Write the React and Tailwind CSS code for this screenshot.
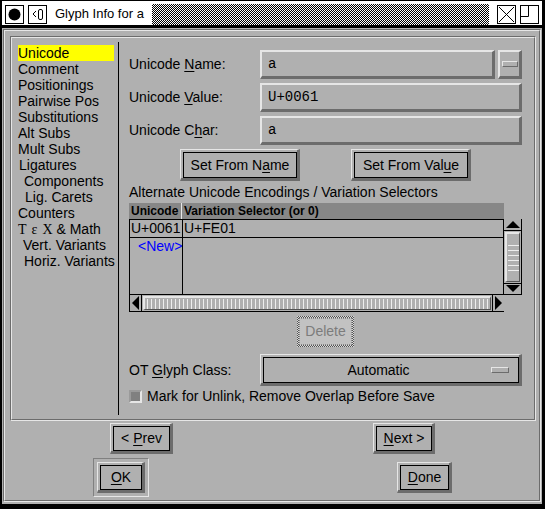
import React from "react";

function U({ children }) {
  return <span className="underline underline-offset-[2px]">{children}</span>;
}

function Box({ children }) {
  return (
    <div className="w-[19px] h-[19px] border border-black bg-white flex items-center justify-center">
      {children}
    </div>
  );
}

function TitleBar() {
  return (
    <div className="h-[24px] bg-white flex items-start shrink-0">
      <div className="ml-[3px] mt-[4px]">
        <Box>
          <svg width="17" height="17" viewBox="0 0 17 17">
            <circle cx="8.5" cy="8.5" r="6" fill="#000" />
          </svg>
        </Box>
      </div>
      <div className="ml-[4px] mt-[4px]">
        <Box>
          <svg width="17" height="17" viewBox="0 0 17 17">
            <rect x="4" y="7" width="1" height="2" fill="#000" />
            <rect x="5" y="6" width="1" height="1" fill="#000" />
            <rect x="5" y="9" width="1" height="1" fill="#000" />
            <rect x="6" y="5" width="1" height="1" fill="#000" />
            <rect x="6" y="10" width="1" height="1" fill="#000" />
            <rect x="9.5" y="3.5" width="4" height="10" rx="1.5" fill="none" stroke="#000" strokeWidth="1" />
          </svg>
        </Box>
      </div>
      <div className="ml-[8px] mt-[5px] text-[13px] leading-[16px] whitespace-nowrap">Glyph Info for a</div>
      <div className="ml-[8px] mt-[3px] h-[21px] flex-1 bg-[repeating-conic-gradient(#000_0_25%,#fff_0_50%)] bg-[length:2px_2px]" />
      <div className="ml-[8px] mt-[4px]">
        <Box>
          <svg width="17" height="17" viewBox="0 0 17 17">
            <path d="M1 1 L16 16 M16 1 L1 16" stroke="#000" strokeWidth="1" fill="none" />
          </svg>
        </Box>
      </div>
      <div className="ml-[4px] mt-[4px] mr-[3px]">
        <Box>
          <svg width="17" height="17" viewBox="0 0 17 17">
            <path d="M7.5 0 L7.5 10.5 L0 10.5" stroke="#000" strokeWidth="1" fill="none" />
          </svg>
        </Box>
      </div>
    </div>
  );
}

function Field({ children, className = "" }) {
  return (
    <div
      className={`h-[29px] border-t-2 border-l-2 border-b-[3px] border-r-[3px] border-t-[#e6e6e6] border-l-[#e6e6e6] border-b-[#6c6c6c] border-r-[#6c6c6c] flex items-center pl-[6px] font-['Liberation_Mono',monospace] text-[14px] ${className}`}
    >
      {children}
    </div>
  );
}

function Button({ children, className = "", w, h = "h-[32px]" }) {
  return (
    <div
      className={`${w} ${h} border-t border-l border-t-[#e6e6e6] border-l-[#e6e6e6] border-b-[3px] border-r-[3px] border-b-[#6c6c6c] border-r-[#6c6c6c] p-[2px] pb-0 pr-0 ${className}`}
    >
      <div className="w-full h-full border border-black flex items-center justify-center text-[14px] whitespace-nowrap">
        {children}
      </div>
    </div>
  );
}

const navItems = [
  ["Unicode", "pl-0", true],
  ["Comment", "pl-0"],
  ["Positionings", "pl-0"],
  ["Pairwise Pos", "pl-0"],
  ["Substitutions", "pl-0"],
  ["Alt Subs", "pl-0"],
  ["Mult Subs", "pl-0"],
  ["Ligatures", "pl-[1px]"],
  ["Components", "pl-[6px]"],
  ["Lig. Carets", "pl-[7px]"],
  ["Counters", "pl-0"],
  ["TEX", "pl-0"],
  ["Vert. Variants", "pl-[5px]"],
  ["Horiz. Variants", "pl-[6px]"],
];

function Nav() {
  return (
    <div className="w-[106px] pt-[7px] pl-[6px] pr-[4px] text-[14px] leading-[16px]">
      {navItems.map(([t, pl, sel]) => (
        <div key={t} className={`h-[16px] whitespace-nowrap ${pl} ${sel ? "bg-[#ffff00]" : ""}`}>
          {t === "TEX" ? (
            <span>
              <span className="font-['Liberation_Serif',serif]">Τ</span>
              <span className="ml-[5px] font-['Liberation_Serif',serif]">ε</span>
              <span className="ml-[5px] font-['Liberation_Serif',serif]">Χ</span> &amp; Math
            </span>
          ) : (
            t
          )}
        </div>
      ))}
    </div>
  );
}

function VScroll() {
  return (
    <div className="w-[18px] h-[76px] border-r border-b border-black flex flex-col">
      <div className="h-[12px] flex items-center justify-center border-b border-black">
        <svg width="14" height="8" viewBox="0 0 14 8">
          <path d="M7 0 L14 7 L0 7 Z" fill="#000" />
        </svg>
      </div>
      <div className="flex-1 mx-[1px] my-[1px] border-t-2 border-l-2 border-t-[#e6e6e6] border-l-[#e6e6e6] border-b border-r border-b-[#555] border-r-[#555] flex flex-col items-center justify-center gap-[4px]">
        {[0, 1, 2, 3, 4, 5].map((i) => (
          <div key={i} className="w-[11px] h-[1px] bg-[#eeeeee]" />
        ))}
      </div>
      <div className="h-[11px] flex items-center justify-center border-t border-black">
        <svg width="14" height="8" viewBox="0 0 14 8">
          <path d="M0 0 L14 0 L7 7 Z" fill="#000" />
        </svg>
      </div>
    </div>
  );
}

function HScroll() {
  const ticks = Array.from({ length: 86 });
  return (
    <div className="h-[17px] w-[375px] border-l border-b border-black flex items-stretch">
      <div className="w-[12px] flex items-center justify-center border-r border-black">
        <svg width="8" height="14" viewBox="0 0 8 14">
          <path d="M0 7 L7 0 L7 14 Z" fill="#000" />
        </svg>
      </div>
      <div className="flex-1 my-[1px] mx-[1px] border-t-2 border-l-2 border-t-[#e6e6e6] border-l-[#e6e6e6] border-b border-r border-b-[#555] border-r-[#555] flex items-center pl-[2px] gap-[3px] overflow-hidden">
        {ticks.map((_, i) => (
          <div key={i} className="w-[1px] h-[10px] bg-[#eeeeee] shrink-0" />
        ))}
      </div>
      <div className="w-[12px] flex items-center justify-center border-l border-black">
        <svg width="8" height="14" viewBox="0 0 8 14">
          <path d="M0 0 L7 7 L0 14 Z" fill="#000" />
        </svg>
      </div>
    </div>
  );
}

function Table() {
  return (
    <div className="flex flex-col">
      <div className="flex">
        <div className="w-[375px] h-[16px] bg-[#878787] flex text-[12px] font-bold leading-[16px]">
          <div className="w-[53px] pl-[2px] border-r border-[#e6e6e6]">Unicode</div>
          <div className="pl-[2px]">Variation Selector (or 0)</div>
        </div>
      </div>
      <div className="flex">
        <div className="w-[375px] h-[76px] border border-black flex text-[14px] leading-[17px]">
          <div className="w-[53px] border-r border-black flex flex-col">
            <div className="h-[18px] border-b border-black pl-[1px]">U+0061</div>
            <div className="pl-[8px] text-[#0000ff]">&lt;New&gt;</div>
          </div>
          <div className="flex-1 flex flex-col">
            <div className="h-[18px] border-b border-black pl-[1px]">U+FE01</div>
          </div>
        </div>
        <VScroll />
      </div>
      <HScroll />
    </div>
  );
}

function RightPanel() {
  return (
    <div className="flex-1 pl-[10px] pr-[12px] pt-[12px] flex flex-col text-[14px]">
      <div className="flex items-center h-[29px]">
        <div className="w-[131px]">
          <span>
            Unicode <U>N</U>ame:
          </span>
        </div>
        <Field className="w-[235px]">a</Field>
        <div className="ml-[3px] w-[24px] h-[29px] border-t-2 border-l-2 border-b-[3px] border-r-[3px] border-t-[#e6e6e6] border-l-[#e6e6e6] border-b-[#6c6c6c] border-r-[#6c6c6c] flex items-center justify-center">
          <div className="w-[16px] h-[6px] border border-t-[#e6e6e6] border-l-[#e6e6e6] border-b-[#6c6c6c] border-r-[#6c6c6c]" />
        </div>
      </div>
      <div className="flex items-center h-[29px] mt-[4px]">
        <div className="w-[131px]">
          <span>
            Unicode <U>V</U>alue:
          </span>
        </div>
        <Field className="flex-1">U+0061</Field>
      </div>
      <div className="flex items-center h-[29px] mt-[4px]">
        <div className="w-[131px]">
          <span>
            Unicode C<U>h</U>ar:
          </span>
        </div>
        <Field className="flex-1">a</Field>
      </div>
      <div className="flex justify-evenly mt-[4px]">
        <Button w="w-[120px]">
          <span>
            Set From N<U>a</U>me
          </span>
        </Button>
        <Button w="w-[120px]">
          <span>
            Set From Val<U>u</U>e
          </span>
        </Button>
      </div>
      <div className="mt-[3px] h-[16px] leading-[16px] whitespace-nowrap">
        Alternate Unicode Encodings / Variation Selectors
      </div>
      <div className="mt-[3px]">
        <Table />
      </div>
      <div className="flex justify-center mt-[4px]">
        <div className="w-[57px] h-[31px] p-[2px] bg-[repeating-conic-gradient(#555_0_25%,#d8d8d8_0_50%)] bg-[length:2px_2px]">
          <div className="w-full h-full bg-[#c2c2c2] flex items-center justify-center text-[#7c7c7c] border border-dotted border-[#888]">
            Delete
          </div>
        </div>
      </div>
      <div className="flex items-center mt-[7px] h-[32px]">
        <div className="w-[131px]">
          <span>
            OT <U>G</U>lyph Class:
          </span>
        </div>
        <Button w="flex-1">
          <div className="flex-1 text-center pl-[2px]">Automatic</div>
          <div className="w-[18px] h-[6px] mr-[9px] border border-t-[#e6e6e6] border-l-[#e6e6e6] border-b-[#6c6c6c] border-r-[#6c6c6c]" />
        </Button>
      </div>
      <div className="flex items-center mt-[4px] h-[13px]">
        <div className="w-[13px] h-[13px] bg-[#808080] border-2 border-t-[#9a9a9a] border-l-[#9a9a9a] border-b-[#e6e6e6] border-r-[#e6e6e6]" />
        <div className="ml-[5px] whitespace-nowrap">Mark for Unlink, Remove Overlap Before Save</div>
      </div>
    </div>
  );
}

function Groove({ className = "", innerClassName = "", children }) {
  return (
    <div className={`border border-t-[#6c6c6c] border-l-[#6c6c6c] border-b-[#e6e6e6] border-r-[#e6e6e6] ${className}`}>
      <div className={`h-full border border-t-[#e6e6e6] border-l-[#e6e6e6] border-b-[#6c6c6c] border-r-[#6c6c6c] ${innerClassName}`}>
        {children}
      </div>
    </div>
  );
}

export default function App() {
  return (
    <div className="w-[545px] h-[509px] bg-black pt-[1px] pl-[2px] pr-[3px] pb-[5px] flex flex-col font-['Liberation_Sans',Arial,sans-serif] text-black overflow-hidden">
      <TitleBar />
      <div className="h-[3px] shrink-0" />
      <div className="flex-1 bg-[#b0b0b0] flex flex-col pt-[1px] pl-[1px] pr-[1px] pb-[2px]">
        <Groove className="flex-1" innerClassName="flex flex-col pl-[5px] pt-[5px]">
          <Groove className="w-[526px] h-[385px] shrink-0" innerClassName="flex">
            <Nav />
            <div className="w-[1px] bg-black mt-[4px] mb-[4px]" />
            <RightPanel />
          </Groove>
          <div className="flex mt-[2px] pl-[100px]">
            <Button w="w-[63px]" h="h-[31px]">
              <span>
                &lt; <U>P</U>rev
              </span>
            </Button>
            <div className="ml-[200px]">
              <Button w="w-[62px]" h="h-[31px]">
                <span>
                  <U>N</U>ext &gt;
                </span>
              </Button>
            </div>
          </div>
          <div className="flex mt-[4px] pl-[83px]">
            <div className="w-[56px] h-[39px] border border-t-[#808080] border-l-[#808080] border-b-[#e6e6e6] border-r-[#e6e6e6] p-[3px]">
              <Button w="w-full" h="h-full">
                <span>
                  <U>O</U>K
                </span>
              </Button>
            </div>
            <div className="ml-[248px] mt-[4px]">
              <Button w="w-[55px]" h="h-[31px]">
                <span>
                  <U>D</U>one
                </span>
              </Button>
            </div>
          </div>
        </Groove>
      </div>
    </div>
  );
}
